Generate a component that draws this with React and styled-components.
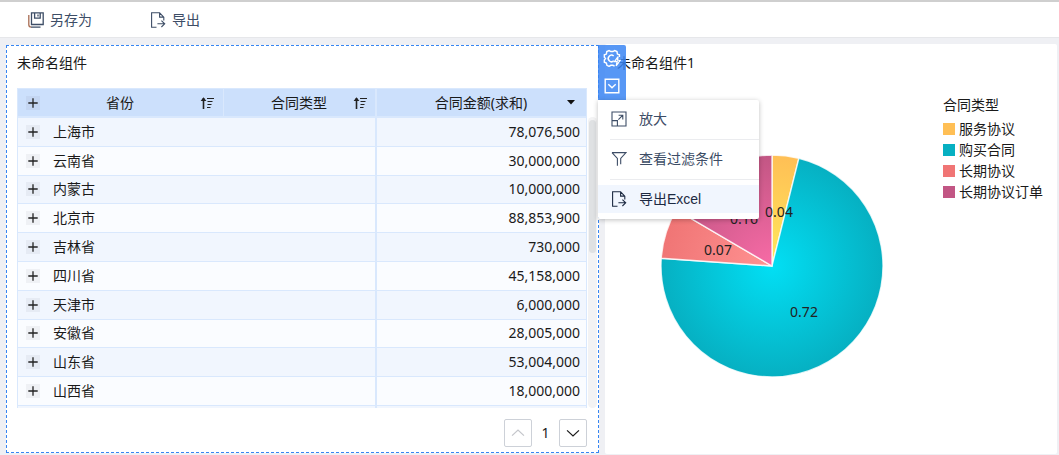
import { Fragment, useState } from "react";
import styled, { createGlobalStyle, ThemeProvider } from "styled-components";

const theme = {
  colors: {
    page: "#eff0f4",
    text: "#1a1a1a",
    slate: "#3d4d66",
    blue: "#3685f2",
    line: "#d9e8fd",
    head: "#cce0fc",
    odd: "#f1f6fe",
    even: "#fafcff",
    gray: "#cdd1d8"
  },
  fonts: {
    data: '"Noto Sans", "Noto Sans CJK SC", sans-serif',
    ui: '"Liberation Sans", "Noto Sans CJK SC", sans-serif'
  }
};

const GlobalStyle = createGlobalStyle`
  * {
    box-sizing: border-box;
  }
  body {
    margin: 0;
    background: ${props => props.theme.colors.page};
    color: ${props => props.theme.colors.text};
    font-family: ${props => props.theme.fonts.data};
    font-size: 14px;
    line-height: 20px;
  }
  button {
    font: inherit;
    color: inherit;
    border: 0;
    padding: 0;
    background: none;
    cursor: pointer;
  }
  svg {
    display: block;
    flex: none;
  }
`;

const Toolbar = styled.header`
  display: flex;
  align-items: center;
  gap: 58px;
  height: 38px;
  padding: 0 28px;
  background: white;
  border-top: 2px solid #cfcfcf;
  border-bottom: 1px solid #e6e7ea;
`;

const ToolButton = styled.button`
  && {
    display: flex;
    align-items: center;
    gap: 6px;
    color: ${props => props.theme.colors.slate};
  }
`;

const Dashboard = styled.main`
  display: grid;
  grid-template-columns: minmax(0, 593fr) minmax(0, 452fr);
  gap: 6px;
  padding: 6px 2px 1px 6px;
`;

const Widget = styled.section`
  background: white;
  border-radius: 2px;
  padding: 9px 12px;
`;

const SelectedWidget = styled(Widget)`
  position: relative;
  margin: 1px 0;
  border: 1px dashed ${props => props.theme.colors.blue};
  border-radius: 0;
  padding: 7px 11px 5px 10px;
`;

const Title = styled.h2`
  margin: 0;
  font-size: 14px;
  font-weight: 400;
  line-height: 20px;
`;

const TableArea = styled.div`
  display: grid;
  grid-template-columns: minmax(0, 1fr) 10px;
  align-items: start;
  height: 320px;
  margin: 15px -10px 0 0;
  overflow: hidden;
`;

const Table = styled.table`
  width: 100%;
  height: 339px;
  table-layout: fixed;
  border-spacing: 0;
  border-left: 1px solid ${props => props.theme.colors.line};
  border-top: 1px solid ${props => props.theme.colors.line};
`;

const Column = styled.col`
  width: ${props => props.$width};
`;

const HeadCell = styled.th`
  height: 29px;
  padding: 0 7px 0 8px;
  font-weight: 400;
  background: ${props => props.theme.colors.head};
  border-right: ${props => props.$rule || 1}px solid ${props => props.theme.colors.line};
  border-bottom: 2px solid ${props => props.theme.colors.line};
`;

const HeadContent = styled.div`
  display: grid;
  grid-template-columns: 14px 1fr 16px;
  align-items: center;
  text-align: center;
`;

const HeadLabel = styled.span`
  grid-column: 2;
`;

const SortButton = styled.button`
  display: flex;
  justify-content: center;
`;

const Row = styled.tr`
  background: ${props => props.theme.colors.odd};
  &:nth-child(even) {
    background: ${props => props.theme.colors.even};
  }
`;

const Cell = styled.td`
  padding: 0 6px 0 8px;
  border-bottom: 1px solid ${props => props.theme.colors.line};
  border-right: ${props => props.$rule || 0}px solid ${props => props.theme.colors.line};
  text-align: ${props => (props.$numeric ? "right" : "left")};
`;

const Name = styled.div`
  display: flex;
  align-items: center;
  gap: 13px;
`;

const ExpandButton = styled.button`
  && {
    display: flex;
    align-items: center;
    justify-content: center;
    width: 14px;
    height: 14px;
    background: rgba(60, 70, 90, 0.06);
  }
`;

const ScrollTrack = styled.div`
  height: 291px;
  margin: 29px 0 0 1px;
  padding: 3px 1px;
  background: #f3f3f4;
  border-radius: 5px;
`;

const ScrollThumb = styled.div`
  height: 133px;
  border-radius: 4px;
  background: #dfe1e3;
`;

const Pager = styled.nav`
  display: flex;
  justify-content: flex-end;
  align-items: center;
  margin-top: 11px;
`;

const PageButton = styled.button`
  && {
    display: flex;
    align-items: center;
    justify-content: center;
    width: 28px;
    height: 28px;
    border: 1px solid ${props => props.theme.colors.gray};
    border-radius: 2px;
  }
  &&:disabled {
    color: #c4c6cb;
  }
`;

const PageNumber = styled.span`
  width: 27px;
  text-align: center;
`;

const Overlay = styled.div`
  position: absolute;
  top: -1px;
  left: 100%;
  z-index: 2;
  font-family: ${props => props.theme.fonts.ui};
`;

const Strip = styled.div`
  display: flex;
  flex-direction: column;
  align-items: center;
  gap: 11px;
  width: 28px;
  height: 55px;
  padding-top: 4px;
  color: white;
  background: rgba(58, 133, 243, 0.85);
  border-radius: 0 2px 0 0;
`;

const Menu = styled.div`
  width: 161px;
  padding: 5px 0 6px;
  background: white;
  border-radius: 0 2px 2px 2px;
  box-shadow: 0 1px 5px rgba(0, 0, 0, 0.25);
`;

const MenuItem = styled.button`
  && {
    display: flex;
    align-items: center;
    gap: 12px;
    width: 100%;
    height: 28px;
    padding-left: 13px;
    color: ${props => (props.$active ? "#1d2a42" : props.theme.colors.slate)};
    background: ${props => (props.$active ? "#f1f6fe" : "none")};
  }
`;

const Divider = styled.hr`
  height: 1px;
  margin: 6px 0 5px 12px;
  border: 0;
  background: #ebecef;
`;

const ChartBody = styled.div`
  display: flex;
  justify-content: space-between;
  align-items: flex-start;
  gap: 20px;
  margin: 22px 2px 0 41px;
`;

const Pie = styled.svg`
  width: 228px;
  height: 228px;
  margin-top: 57px;
  overflow: visible;
  text {
    font-size: 14px;
    fill: #222;
    text-anchor: middle;
  }
`;

const Legend = styled.div`
  width: 100px;
  white-space: nowrap;
`;

const LegendTitle = styled.div`
  line-height: 20px;
  margin-bottom: 3px;
`;

const LegendList = styled.ul`
  list-style: none;
  margin: 0;
  padding: 0;
  line-height: 21px;
`;

const LegendItem = styled.li`
  display: flex;
  align-items: center;
  gap: 4px;
  &::before {
    content: "";
    width: 12px;
    height: 12px;
    background: ${props => props.$color};
  }
`;

const Icon = ({ size = 16, children }) => (
  <svg
    width={size}
    height={size}
    viewBox="0 0 16 16"
    fill="none"
    stroke="currentColor"
    strokeWidth="1.1"
    aria-hidden="true"
  >
    {children}
  </svg>
);

const SaveAsIcon = () => (
  <Icon>
    <path strokeWidth="1.3" d="M3.5 .8h11.7v11.7H3.5zM6.6 .8v5.4h5.6V.8M10 2.6v1.8M12.5 15.2H3" />
    <path strokeWidth="1.3" d="M.8 3v9.8q0 2.4 2.4 2.4" stroke="#a86c52" />
  </Icon>
);

const ExportIcon = () => (
  <Icon>
    <path d="M6.5 15.2H1.6V.8h8l4.2 4.3v3.4M9.6 .8v4.3h4.2M7.4 11.8h7.2M11.4 8.6l3.3 3.2-3.3 3.2" />
  </Icon>
);

const EnlargeIcon = () => (
  <Icon>
    <path d="M1 1h14v14H1zM1 9.6h5.4V15M7.6 4.2h4.2v4.2M11.8 4.2L7.4 8.6" />
  </Icon>
);

const FilterIcon = () => (
  <Icon>
    <path d="M1 1.6h14L9.7 7.4v4.2M1 1.6l5.4 5.8v7.4M9.7 10.8v2.4" />
  </Icon>
);

const GearIcon = () => (
  <Icon size={18}>
    <path
      strokeWidth="1.3"
      d="M14.6 7V5.2l-1.8-.7-.4-2.2-2-.9-1.6.9H7l-1.6-.9-2 .9L3 4.5 1.2 5.2v2.2l1 1.1-1 1.2v2l1.8.7.5 2.1 1.9.9 1.6-.9h1.8l1.5.8"
    />
    <path strokeWidth="1.3" d="M9.5 6.2a2.9 2.9 0 1 0 .1 4.3" />
    <path d="M13.4 6.8l-3.2 4.4h2.4l-.9 3.8 3.6-5h-2.4z" />
  </Icon>
);

const BoxDownIcon = () => (
  <Icon>
    <path strokeWidth="1.4" d="M1.2 1.2h13.6v13.6H1.2zM4.3 6.3L8 9.8l3.7-3.5" />
  </Icon>
);

const PlusIcon = () => (
  <svg width="10" height="10" viewBox="0 0 10 10" stroke="#222" strokeWidth="1.3" aria-hidden="true">
    <path d="M5 .3v9.4M.3 5h9.4" />
  </svg>
);

const SortIcon = () => (
  <svg width="15" height="14" viewBox="0 0 15 14" fill="none" stroke="#222" aria-hidden="true">
    <path d="M3.5 13V2" strokeWidth="1.6" />
    <path d="M.6 5L3.5 1.2 6.4 5z" fill="#222" stroke="none" />
    <path d="M7 2.5h7M7.5 5.5h5M7.5 8.5h4M7 11.5h3.5" strokeWidth="1.2" />
  </svg>
);

const CaretIcon = () => (
  <svg width="8" height="5" viewBox="0 0 8 5" aria-hidden="true">
    <path d="M0 0h8L4 4.6z" fill="#111" />
  </svg>
);

const Chevron = ({ up }) => (
  <Icon size={14}>
    <path strokeWidth="1.4" d={up ? "M1.2 11L8 4.6 14.8 11" : "M1.2 5L8 11.4 14.8 5"} />
  </Icon>
);

const rows = [
  ["上海市", "78,076,500"],
  ["云南省", "30,000,000"],
  ["内蒙古", "10,000,000"],
  ["北京市", "88,853,900"],
  ["吉林省", "730,000"],
  ["四川省", "45,158,000"],
  ["天津市", "6,000,000"],
  ["安徽省", "28,005,000"],
  ["山东省", "53,004,000"],
  ["山西省", "18,000,000"]
];

// angles run clockwise from twelve o'clock
const slices = [
  { name: "服务协议", value: "0.04", from: 0, to: 14, inner: "#ffe85c", outer: "#ffbf55", x: 121, y: 65 },
  { name: "购买合同", value: "0.72", from: 14, to: 274, inner: "#02dff4", outer: "#06b0c2", x: 146, y: 165 },
  { name: "长期协议", value: "0.07", from: 274, to: 300.4, inner: "#ff9292", outer: "#f07575", x: 60, y: 103 },
  { name: "长期协议订单", value: "0.16", from: 300.4, to: 360, inner: "#f86ba6", outer: "#c25684", x: 86, y: 72 }
];

const point = angle => {
  const rad = (angle * Math.PI) / 180;
  return `${114 + 111 * Math.sin(rad)} ${114 - 111 * Math.cos(rad)}`;
};

const slicePath = ({ from, to }) =>
  `M114 114L${point(from)}A111 111 0 ${to - from > 180 ? 1 : 0} 1 ${point(to)}Z`;

const menuItems = [
  { label: "放大", icon: EnlargeIcon },
  { label: "查看过滤条件", icon: FilterIcon },
  { label: "导出Excel", icon: ExportIcon, active: true }
];

const DataTable = () => (
  <TableArea>
    <Table>
      <colgroup>
        <Column $width="36.2%" />
        <Column $width="26.9%" />
        <Column />
      </colgroup>
      <thead>
        <tr>
          <HeadCell>
            <HeadContent>
              <ExpandButton aria-label="展开全部"><PlusIcon /></ExpandButton>
              <HeadLabel>省份</HeadLabel>
              <SortButton aria-label="省份排序"><SortIcon /></SortButton>
            </HeadContent>
          </HeadCell>
          <HeadCell $rule={2}>
            <HeadContent>
              <HeadLabel>合同类型</HeadLabel>
              <SortButton aria-label="合同类型排序"><SortIcon /></SortButton>
            </HeadContent>
          </HeadCell>
          <HeadCell>
            <HeadContent>
              <HeadLabel>合同金额(求和)</HeadLabel>
              <SortButton aria-label="合同金额排序"><CaretIcon /></SortButton>
            </HeadContent>
          </HeadCell>
        </tr>
      </thead>
      <tbody>
        {rows.map(([name, amount]) => (
          <Row key={name}>
            <Cell>
              <Name>
                <ExpandButton aria-label={`展开${name}`}><PlusIcon /></ExpandButton>
                {name}
              </Name>
            </Cell>
            <Cell $rule={2} />
            <Cell $rule={1} $numeric>{amount}</Cell>
          </Row>
        ))}
      </tbody>
      <tfoot>
        <Row>
          <Cell />
          <Cell $rule={2} />
          <Cell $rule={1}>&nbsp;</Cell>
        </Row>
      </tfoot>
    </Table>
    <ScrollTrack>
      <ScrollThumb />
    </ScrollTrack>
  </TableArea>
);

const PieChart = () => (
  <ChartBody>
    <Pie viewBox="0 0 228 228" role="img" aria-label="合同类型">
      <defs>
        {slices.map((slice, i) => (
          <radialGradient key={slice.name} id={`slice${i}`} gradientUnits="userSpaceOnUse" cx="114" cy="114" r="111">
            <stop offset="0" stopColor={slice.inner} />
            <stop offset="1" stopColor={slice.outer} />
          </radialGradient>
        ))}
      </defs>
      {slices.map((slice, i) => (
        <path key={slice.name} d={slicePath(slice)} fill={`url(#slice${i})`} stroke="#fff" strokeOpacity="0.8" strokeWidth="1.4" />
      ))}
      {slices.map(slice => (
        <text key={slice.name} x={slice.x} y={slice.y}>{slice.value}</text>
      ))}
    </Pie>
    <Legend>
      <LegendTitle>合同类型</LegendTitle>
      <LegendList>
        {slices.map(slice => (
          <LegendItem key={slice.name} $color={slice.outer}>{slice.name}</LegendItem>
        ))}
      </LegendList>
    </Legend>
  </ChartBody>
);

const App = () => {
  const [menuOpen, setMenuOpen] = useState(true);

  return (
    <ThemeProvider theme={theme}>
      <GlobalStyle />
      <Toolbar>
        <ToolButton><SaveAsIcon />另存为</ToolButton>
        <ToolButton><ExportIcon />导出</ToolButton>
      </Toolbar>
      <Dashboard>
        <SelectedWidget>
          <Title>未命名组件</Title>
          <DataTable />
          <Pager>
            <PageButton disabled aria-label="上一页"><Chevron up /></PageButton>
            <PageNumber>1</PageNumber>
            <PageButton aria-label="下一页"><Chevron /></PageButton>
          </Pager>
          <Overlay>
            <Strip>
              <button aria-label="设置"><GearIcon /></button>
              <button aria-label="更多" onClick={() => setMenuOpen(!menuOpen)}><BoxDownIcon /></button>
            </Strip>
            {menuOpen && (
              <Menu>
                {menuItems.map((item, i) => (
                  <Fragment key={item.label}>
                    {i > 0 && <Divider />}
                    <MenuItem $active={item.active}><item.icon />{item.label}</MenuItem>
                  </Fragment>
                ))}
              </Menu>
            )}
          </Overlay>
        </SelectedWidget>
        <Widget>
          <Title>未命名组件1</Title>
          <PieChart />
        </Widget>
      </Dashboard>
    </ThemeProvider>
  );
};

export default App;
